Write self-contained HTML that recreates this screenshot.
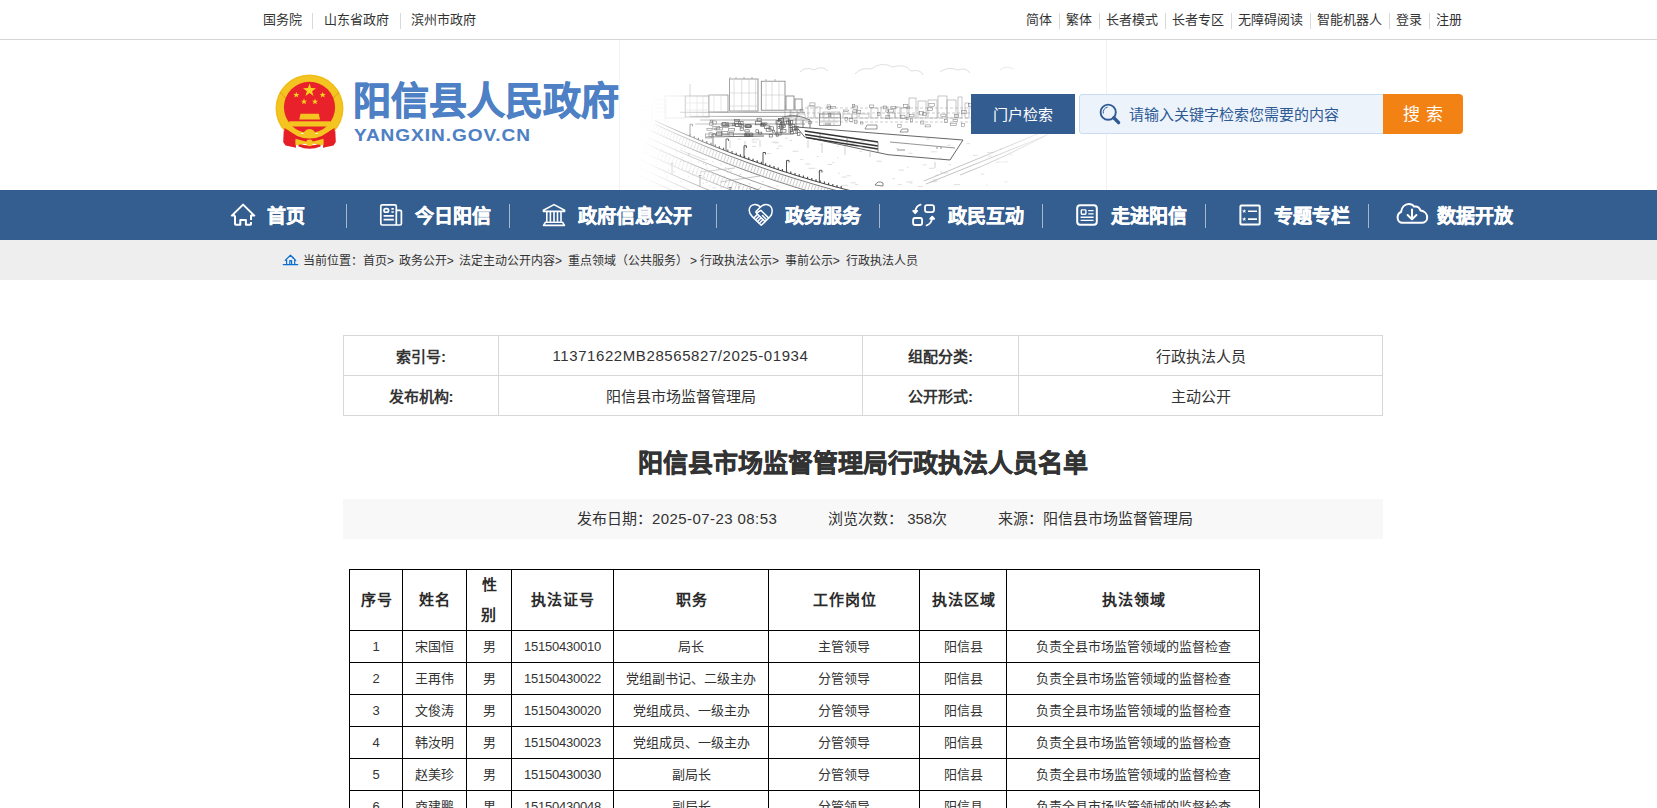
<!DOCTYPE html>
<html lang="zh-CN">
<head>
<meta charset="utf-8">
<title>阳信县市场监督管理局行政执法人员名单</title>
<style>
*{margin:0;padding:0;box-sizing:border-box}
html,body{width:1657px;height:808px;overflow:hidden;background:#fff}
body{font-family:"Liberation Sans",sans-serif;color:#333;position:relative}
.abs{position:absolute;white-space:nowrap}
/* top bar */
#top{position:absolute;left:0;top:0;width:1657px;height:40px;border-bottom:1px solid #d6d6d6}
#top .t{position:absolute;top:10px;font-size:13px;line-height:20px;color:#333;white-space:nowrap}
#top .s{position:absolute;top:13px;width:1px;height:16px;background:#d9d9d9}
/* header */
#hdr{position:absolute;left:0;top:40px;width:1657px;height:150px;background:#fff}
#title{position:absolute;left:353px;top:76px;font-size:38px;line-height:50px;font-weight:bold;color:#4d80c4;-webkit-text-stroke:.9px #4d80c4;white-space:nowrap}
#domain{position:absolute;left:354px;top:121px;font-size:17px;line-height:30px;font-weight:bold;color:#4d80c4;letter-spacing:.85px;-webkit-text-stroke:.1px #4d80c4;transform:scaleX(1.12);transform-origin:0 0;white-space:nowrap}
#sbtn{position:absolute;left:971px;top:94px;width:104px;height:40px;background:#335c91;color:#fff;font-size:15px;line-height:42px;text-align:center}
#sinput{position:absolute;left:1079px;top:94px;width:306px;height:40px;background:#edf3fb;border:1px solid #c9dcf3;border-radius:3px 0 0 3px}
#sph{position:absolute;left:1129px;top:105px;font-size:15px;line-height:20px;color:#2d5a94;white-space:nowrap}
#sgo{position:absolute;left:1383px;top:94px;width:80px;height:40px;background:#f28214;border-radius:0 4px 4px 0;color:#fff;font-size:17px;line-height:42px;text-align:center;letter-spacing:6px;text-indent:6px}
/* nav */
#nav{position:absolute;left:0;top:190px;width:1657px;height:50px;background:#345d90}
#navi .n{position:absolute;top:202px;font-size:19px;line-height:30px;font-weight:bold;-webkit-text-stroke:.45px #fff;color:#fff;white-space:nowrap}
#navi .sep{position:absolute;top:204px;width:1px;height:24px;background:rgba(255,255,255,.55)}
#navi svg{position:absolute}
/* breadcrumb */
#bc{position:absolute;left:0;top:240px;width:1657px;height:40px;background:#eeeeee}
#bct span{position:absolute;top:251px;font-size:12px;line-height:20px;color:#333;white-space:nowrap}
/* info table */
table{border-collapse:collapse}
#info{position:absolute;left:343px;top:335px;width:1040px;table-layout:fixed}
#info td{border:1px solid #d7d7d7;height:40px;text-align:center;font-size:15px;color:#333;padding:0}
#info td.l{font-weight:bold}
#atitle{position:absolute;left:343px;width:1040px;top:443px;font-size:25px;line-height:40px;font-weight:bold;color:#333;-webkit-text-stroke:.5px #333;text-align:center;white-space:nowrap}
#meta{position:absolute;left:343px;top:499px;width:1040px;height:40px;background:#f8f8f8}
.mt{position:absolute;top:509px;font-size:15px;line-height:20px;color:#333;white-space:nowrap}
/* data table */
#dt{position:absolute;left:349px;top:569px;table-layout:fixed}
#dt td{border:1px solid #000;text-align:center;font-size:13px;color:#333;padding:0;height:32px;line-height:20px}
#dt td.n{letter-spacing:-.25px}
#dt tr.h td{font-weight:bold;font-size:15px;height:61px;line-height:30px;color:#2a2a2a;letter-spacing:1px;text-indent:1px}
</style>
</head>
<body>
<div id="top">
  <span class="t" style="left:263px">国务院</span>
  <span class="s" style="left:312px"></span>
  <span class="t" style="left:324px">山东省政府</span>
  <span class="s" style="left:400px"></span>
  <span class="t" style="left:411px">滨州市政府</span>

  <span class="t" style="left:1026px">简体</span>
  <span class="s" style="left:1059px"></span>
  <span class="t" style="left:1066px">繁体</span>
  <span class="s" style="left:1099px"></span>
  <span class="t" style="left:1106px">长者模式</span>
  <span class="s" style="left:1165px"></span>
  <span class="t" style="left:1172px">长者专区</span>
  <span class="s" style="left:1231px"></span>
  <span class="t" style="left:1238px">无障碍阅读</span>
  <span class="s" style="left:1310px"></span>
  <span class="t" style="left:1317px">智能机器人</span>
  <span class="s" style="left:1389px"></span>
  <span class="t" style="left:1396px">登录</span>
  <span class="s" style="left:1429px"></span>
  <span class="t" style="left:1436px">注册</span>
</div>

<div id="hdr"></div>
<svg class="abs" style="left:619px;top:40px" width="488" height="150" viewBox="619 40 488 150"><defs><linearGradient id="fl" x1="0" x2="1" y1="0" y2="0"><stop offset="0" stop-color="#fff" stop-opacity="1"/><stop offset=".06" stop-color="#fff" stop-opacity=".95"/><stop offset=".16" stop-color="#fff" stop-opacity=".45"/><stop offset=".26" stop-color="#fff" stop-opacity="0"/><stop offset=".72" stop-color="#fff" stop-opacity="0"/><stop offset=".85" stop-color="#fff" stop-opacity=".6"/><stop offset="1" stop-color="#fff" stop-opacity=".9"/></linearGradient><linearGradient id="ft" x1="0" x2="0" y1="0" y2="1"><stop offset="0" stop-color="#fff" stop-opacity=".6"/><stop offset=".3" stop-color="#fff" stop-opacity="0"/></linearGradient><clipPath id="sc"><rect x="619" y="40" width="488" height="150"/></clipPath></defs><g clip-path="url(#sc)"><path d="M800 72 q6-6 14-2 q8-5 14 1 M855 74 q6-7 16-5 q10-8 22-2 q12-4 18 4 q10-2 12 4 M940 72 q8-6 18-2 q8-3 12 3 M1000 70 q6-5 14-1" stroke="#c4c4c4" stroke-width=".7" fill="none"/><g stroke="#a0a0a0" stroke-width=".6" fill="none"><rect x="785" y="106" width="5" height="12"/><rect x="791" y="107" width="6" height="11"/><rect x="797" y="114" width="8" height="4"/><rect x="808" y="106" width="6" height="12"/><rect x="815" y="107" width="5" height="11"/><rect x="823" y="112" width="7" height="6"/><rect x="831" y="112" width="9" height="6"/><rect x="843" y="114" width="9" height="4"/><rect x="852" y="114" width="5" height="4"/><rect x="859" y="114" width="10" height="4"/><rect x="871" y="108" width="7" height="10"/><rect x="881" y="107" width="7" height="11"/><rect x="889" y="113" width="6" height="5"/><rect x="895" y="107" width="5" height="11"/><rect x="901" y="108" width="6" height="10"/><rect x="909" y="98" width="7" height="20"/><rect x="918" y="101" width="8" height="17"/><rect x="928" y="100" width="9" height="18"/><rect x="938" y="96" width="9" height="22"/><rect x="947" y="100" width="9" height="18"/><rect x="958" y="97" width="4" height="21"/><rect x="965" y="103" width="4" height="15"/><rect x="972" y="100" width="5" height="18"/><rect x="980" y="108" width="10" height="10"/><rect x="990" y="114" width="4" height="4"/><rect x="997" y="109" width="9" height="9"/><rect x="1008" y="111" width="8" height="7"/></g><path d="M790 108 H1000 M792 113 H1010 M800 118 H1030 M800 122 H1000" stroke="#999" stroke-width=".5" stroke-dasharray="3 2" fill="none"/><g stroke="#7a7a7a" stroke-width=".8" fill="#fff"><rect x="729.5" y="79" width="28.5" height="32"/><rect x="761.3" y="81.2" width="23.7" height="29"/><rect x="685.3" y="96" width="23.7" height="21"/><rect x="709" y="95" width="19" height="17"/><rect x="665" y="96" width="20" height="22" stroke="#bbb"/><rect x="786" y="96" width="8" height="14"/><rect x="795" y="99" width="7" height="11"/></g><path d="M734 79 V111 M741.7 79 V111 M749 79 V111 M755.6 79 V111 M729.5 93 H758 M729.5 106 H758 M766 81 V110 M772 81 V110 M779 81 V110 M761.3 95 H785 M690 96 V117 M697 96 V117 M703 96 V117 M685.3 103 H709 M685.3 110 H709 M714 95 V112 M721 95 V112" stroke="#bdbdbd" stroke-width=".5" fill="none"/><path d="M730 77 v2 M736 77 v2 M744 77 v2 M752 77 v2 M766 79 v2 M775 79 v2 M690 84 v12" stroke="#777" stroke-width=".6"/><g stroke="#c4c4c4" stroke-width=".5" fill="none"><rect x="652" y="100" width="14" height="20"/><rect x="640" y="106" width="12" height="16"/><path d="M655 104 h10 M655 108 h10 M655 112 h10 M642 110 h9 M642 114 h9"/></g><path d="M680 112.3 H805 M690 116.4 H800 M700 120 H810 M695 124 H805" stroke="#777" stroke-width=".7" fill="none"/><g stroke="#555" stroke-width=".6" fill="none"><rect x="734.4" y="119.3" width="5.0" height="1.6"/><rect x="723.8" y="124.9" width="5.1" height="1.9"/><rect x="709.0" y="132.8" width="3.6" height="3.9"/><rect x="790.2" y="124.4" width="4.3" height="2.8"/><rect x="766.2" y="128.1" width="4.8" height="3.1"/><rect x="794.4" y="126.6" width="4.2" height="3.3"/><rect x="727.6" y="123.1" width="6.9" height="2.8"/><rect x="757.1" y="118.2" width="4.1" height="2.9"/><rect x="706.9" y="128.5" width="5.2" height="1.7"/><rect x="764.6" y="125.9" width="5.4" height="2.4"/><rect x="772.2" y="130.5" width="2.1" height="1.7"/><rect x="769.2" y="134.4" width="3.3" height="2.6"/><rect x="761.3" y="123.4" width="3.8" height="2.3"/><rect x="740.1" y="128.1" width="3.5" height="2.4"/><rect x="778.4" y="118.5" width="4.8" height="3.3"/><rect x="734.5" y="121.8" width="6.0" height="2.1"/><rect x="722.8" y="125.4" width="5.5" height="1.8"/><rect x="735.6" y="123.7" width="6.2" height="2.6"/><rect x="786.3" y="120.9" width="3.7" height="3.1"/><rect x="789.1" y="125.7" width="3.1" height="1.8"/><rect x="755.3" y="121.2" width="6.0" height="3.6"/><rect x="722.4" y="122.7" width="6.0" height="3.1"/><rect x="781.6" y="123.9" width="2.6" height="2.2"/><rect x="780.4" y="122.6" width="3.7" height="2.5"/><rect x="744.9" y="125.0" width="6.6" height="1.9"/><rect x="705.4" y="134.0" width="6.4" height="4.0"/><rect x="746.3" y="134.2" width="6.6" height="2.1"/><rect x="775.8" y="132.2" width="5.3" height="2.8"/><rect x="732.5" y="123.8" width="3.1" height="1.7"/><rect x="760.9" y="122.9" width="6.1" height="1.6"/><rect x="790.8" y="129.8" width="6.6" height="3.7"/><rect x="790.5" y="127.8" width="2.1" height="3.4"/><rect x="721.3" y="123.1" width="5.3" height="2.8"/><rect x="744.3" y="134.0" width="5.1" height="2.4"/><rect x="729.0" y="132.6" width="4.4" height="3.5"/><rect x="738.4" y="121.4" width="4.7" height="3.5"/><rect x="721.3" y="131.5" width="6.6" height="3.5"/><rect x="783.2" y="118.1" width="5.1" height="3.7"/><rect x="709.7" y="122.6" width="3.3" height="2.8"/><rect x="745.2" y="126.0" width="5.9" height="1.5"/><rect x="710.2" y="120.2" width="2.6" height="1.7"/><rect x="797.6" y="132.5" width="2.4" height="2.8"/><rect x="735.0" y="123.3" width="3.8" height="3.1"/><rect x="760.7" y="124.1" width="3.0" height="2.3"/><rect x="716.8" y="127.4" width="5.6" height="2.5"/><rect x="712.6" y="121.0" width="3.9" height="3.0"/><rect x="779.3" y="124.5" width="6.0" height="3.1"/><rect x="746.0" y="124.3" width="4.5" height="3.3"/><rect x="744.9" y="129.8" width="4.3" height="2.1"/><rect x="755.9" y="129.8" width="2.4" height="2.6"/><rect x="745.5" y="133.0" width="6.7" height="2.4"/><rect x="790.3" y="131.4" width="3.3" height="2.7"/><rect x="716.7" y="131.8" width="5.3" height="3.7"/><rect x="780.3" y="129.3" width="5.7" height="2.9"/><rect x="714.8" y="128.0" width="2.0" height="1.9"/><rect x="778.6" y="118.8" width="2.5" height="1.7"/><rect x="788.6" y="121.0" width="2.1" height="3.6"/><rect x="716.5" y="132.3" width="5.4" height="3.6"/><rect x="795.5" y="127.8" width="6.0" height="1.6"/><rect x="777.9" y="126.7" width="5.6" height="1.8"/><rect x="776.2" y="133.9" width="2.3" height="2.3"/><rect x="758.6" y="132.1" width="3.2" height="1.9"/><rect x="728.7" y="128.5" width="5.8" height="2.5"/><rect x="739.9" y="124.7" width="3.8" height="2.5"/><rect x="712.9" y="126.5" width="6.9" height="2.5"/><rect x="776.0" y="120.7" width="5.5" height="3.4"/><rect x="769.0" y="126.8" width="4.4" height="3.1"/><rect x="790.3" y="120.5" width="2.5" height="3.4"/><rect x="792.1" y="126.8" width="4.2" height="3.3"/><rect x="722.7" y="122.5" width="3.0" height="3.0"/></g><g stroke="#777" stroke-width=".5" fill="none"><rect x="853.0" y="106.0" width="4.8" height="3.4"/><rect x="849.2" y="118.3" width="3.7" height="3.2"/><rect x="906.9" y="106.9" width="2.9" height="1.5"/><rect x="885.9" y="110.0" width="2.7" height="2.2"/><rect x="854.4" y="120.1" width="2.6" height="3.5"/><rect x="885.9" y="115.6" width="3.9" height="3.2"/><rect x="954.3" y="114.5" width="3.9" height="2.9"/><rect x="961.3" y="110.4" width="4.9" height="3.4"/><rect x="883.5" y="106.0" width="2.9" height="2.9"/><rect x="925.1" y="124.9" width="5.4" height="2.0"/><rect x="827.9" y="106.7" width="2.7" height="2.9"/><rect x="961.7" y="123.4" width="3.0" height="3.2"/><rect x="852.7" y="111.0" width="4.9" height="1.7"/><rect x="808.5" y="121.7" width="3.2" height="2.2"/><rect x="906.1" y="117.6" width="2.0" height="2.2"/><rect x="877.2" y="112.6" width="2.8" height="2.7"/><rect x="981.1" y="110.2" width="4.2" height="1.7"/><rect x="845.0" y="117.3" width="2.5" height="3.3"/><rect x="971.8" y="102.5" width="5.8" height="2.2"/><rect x="944.5" y="119.7" width="3.2" height="2.9"/><rect x="920.8" y="121.0" width="3.1" height="3.0"/><rect x="982.3" y="117.5" width="4.1" height="1.7"/><rect x="888.8" y="109.2" width="4.9" height="2.9"/><rect x="903.3" y="104.7" width="4.6" height="2.8"/><rect x="825.8" y="123.1" width="4.6" height="1.7"/><rect x="976.4" y="103.7" width="3.3" height="2.9"/><rect x="909.5" y="114.4" width="4.6" height="2.4"/><rect x="852.5" y="104.6" width="2.3" height="2.9"/><rect x="940.9" y="114.1" width="5.0" height="2.2"/><rect x="843.2" y="110.0" width="5.5" height="1.6"/><rect x="890.9" y="106.4" width="5.1" height="2.2"/><rect x="856.6" y="110.5" width="4.2" height="3.0"/><rect x="860.6" y="122.0" width="2.4" height="2.0"/><rect x="809.9" y="102.9" width="5.1" height="3.0"/><rect x="827.0" y="104.9" width="3.7" height="3.0"/><rect x="953.1" y="119.5" width="4.4" height="1.8"/><rect x="869.7" y="105.0" width="4.1" height="2.6"/><rect x="830.4" y="106.5" width="5.1" height="1.6"/><rect x="950.6" y="123.2" width="5.8" height="2.3"/><rect x="900.5" y="115.2" width="4.5" height="3.5"/><rect x="927.3" y="107.8" width="5.4" height="2.5"/><rect x="910.3" y="118.9" width="2.0" height="3.0"/><rect x="922.4" y="112.8" width="4.1" height="2.4"/><rect x="828.7" y="113.8" width="2.1" height="2.5"/><rect x="919.2" y="111.5" width="4.3" height="3.4"/><rect x="968.4" y="103.5" width="5.2" height="2.7"/><rect x="800.1" y="109.4" width="2.9" height="1.7"/><rect x="897.8" y="124.2" width="3.3" height="3.2"/><rect x="928.9" y="103.5" width="5.4" height="2.7"/><rect x="975.4" y="118.6" width="5.0" height="2.2"/></g><path d="M706 137 L764 136 M712 134 H790" stroke="#555" stroke-width=".9" fill="none"/><path d="M777 133 V121 Q790 110 810 120 V133 M782 133 V122 M789 133 V118 M796 133 V118 M803 133 V120" stroke="#666" stroke-width=".8" fill="none"/><rect x="819.4" y="114" width="21.2" height="11.3" fill="none" stroke="#666" stroke-width=".7"/><path d="M819.4 117.5 H840.6 M819.4 121 H840.6 M824 114 V125 M829 114 V125 M834 114 V125" stroke="#999" stroke-width=".5"/><path d="M796.5 127 L963 140 L950 160 L888 154.7 L804.7 137 Z" fill="#fff" stroke="#555" stroke-width=".9"/><path d="M804.7 131 L878 142 M805 134.5 L878 146 M806 137.5 L878 149" stroke="#333" stroke-width="1.4" fill="none"/><path d="M878 142 V152 M820 133.5 V141 M847 137 V146 M890 142 L955 148 M897 150 h8 M936 148 h2 M940 148 h2" stroke="#666" stroke-width=".7" fill="none"/><path d="M865 129 h12 v-4 h-10 z M900 132 h8 v-3 h-6 z" stroke="#555" stroke-width=".6" fill="none"/><path d="M953.9 184.6 h6.2 M846.7 175.8 h4.2 M751.6 140.1 h1.9 M778.1 146.0 h4.2 M922.8 164.9 h3.8 M908.3 153.2 h4.1 M939.6 158.1 h2.5 M980.8 174.0 h3.5 M827.6 164.5 h4.8 M784.9 138.1 h2.6 M947.1 145.2 h4.0 M776.6 148.5 h2.4 M837.1 146.4 h1.7 M751.9 146.4 h4.2 M737.3 139.1 h4.0 M838.2 173.2 h1.8 M837.0 157.8 h1.6 M1000.0 148.9 h2.0 M857.6 146.2 h4.9 M820.4 144.2 h1.8 M931.0 151.8 h5.8 M855.0 184.6 h3.2 M792.5 151.3 h6.0 M902.4 155.2 h2.0 M917.9 186.5 h4.8 M909.8 183.0 h2.6 M1002.4 161.8 h5.9 M986.0 185.0 h1.7 M808.4 168.3 h6.7 M966.5 143.7 h3.6 M816.9 172.0 h6.6 M932.8 179.8 h4.5 M987.8 156.1 h3.8 M859.4 151.5 h2.4 M929.0 168.3 h5.4 M832.2 162.4 h2.3 M926.1 139.1 h4.1 M940.0 171.9 h2.0 M906.3 181.9 h6.3 M850.5 182.8 h5.5 M816.8 156.5 h1.9 M751.9 142.0 h5.1 M789.8 140.4 h2.3 M906.9 167.3 h1.6 M841.7 177.1 h4.8 M948.7 164.8 h2.5 M771.5 142.0 h6.0 M752.6 139.2 h6.8 M898.5 170.1 h5.7 M972.8 155.3 h4.8 M849.2 143.5 h6.1 M892.4 178.7 h2.6 M876.4 161.2 h5.5 M860.5 141.6 h4.5 M933.2 159.1 h5.1 M895.7 148.7 h3.4 M1008.8 154.8 h3.9 M930.6 181.7 h6.9 M897.5 184.6 h4.4 M841.4 185.4 h6.5 M995.4 162.2 h5.8 M986.9 152.6 h6.6 M773.5 142.8 h5.5 M805.3 164.0 h5.0 M800.0 159.6 h3.4 M935.2 175.3 h3.1 M839.2 141.9 h2.3 M941.2 173.0 h6.9 M1004.1 181.8 h3.5 M766.8 153.6 h4.0" stroke="#c4c4c4" stroke-width=".55" fill="none"/><path d="M808 140 v8 M822 143 v10 M845 146 v9 M870 150 v7 M935 162 v6 M730 140 v8 M745 141 v9 M760 140 v7" stroke="#b4b4b4" stroke-width=".6"/><path d="M655.0 120.7 L659.0 122.5 L663.0 124.4 L667.0 126.2 L671.0 128.0 L675.0 129.8 L679.0 131.5 L683.0 133.3 L687.0 135.0 L691.0 136.7 L695.0 138.4 L699.0 140.1 L703.0 141.8 L707.0 143.4 L711.0 145.0 L715.0 146.6 L719.0 148.2 L723.0 149.8 L727.0 151.4 L731.0 152.9 L735.0 154.4 L739.0 155.9 L743.0 157.4 L747.0 158.9 L751.0 160.3 L755.0 161.7 L759.0 163.1 L763.0 164.5 L767.0 165.9 L771.0 167.3 L775.0 168.6 L779.0 170.0 L783.0 171.3 L787.0 172.5 L791.0 173.8 L795.0 175.1 L799.0 176.3 L803.0 177.5 L807.0 178.7 L811.0 179.9 L815.0 181.1 L819.0 182.2 L823.0 183.4 L827.0 184.5 L831.0 185.6 L835.0 186.7 L839.0 187.7 L843.0 188.8 L847.0 189.8 L851.0 190.8 L855.0 191.8 L859.0 192.8" stroke="#444" stroke-width="1.0" fill="none"/><path d="M655.0 124.2 L659.0 126.0 L663.0 127.9 L667.0 129.7 L671.0 131.5 L675.0 133.3 L679.0 135.0 L683.0 136.8 L687.0 138.5 L691.0 140.2 L695.0 141.9 L699.0 143.6 L703.0 145.3 L707.0 146.9 L711.0 148.5 L715.0 150.1 L719.0 151.7 L723.0 153.3 L727.0 154.9 L731.0 156.4 L735.0 157.9 L739.0 159.4 L743.0 160.9 L747.0 162.4 L751.0 163.8 L755.0 165.2 L759.0 166.6 L763.0 168.0 L767.0 169.4 L771.0 170.8 L775.0 172.1 L779.0 173.5 L783.0 174.8 L787.0 176.0 L791.0 177.3 L795.0 178.6 L799.0 179.8 L803.0 181.0 L807.0 182.2 L811.0 183.4 L815.0 184.6 L819.0 185.7 L823.0 186.9 L827.0 188.0 L831.0 189.1 L835.0 190.2 L839.0 191.2 L843.0 192.3 L847.0 193.3 L851.0 194.3 L855.0 195.3 L859.0 196.3" stroke="#555" stroke-width="0.8" fill="none"/><path d="M650.0 130.3 L654.0 132.2 L658.0 134.1 L662.0 135.9 L666.0 137.7 L670.0 139.5 L674.0 141.3 L678.0 143.1 L682.0 144.9 L686.0 146.6 L690.0 148.3 L694.0 150.0 L698.0 151.7 L702.0 153.3 L706.0 155.0 L710.0 156.6 L714.0 158.2 L718.0 159.8 L722.0 161.4 L726.0 163.0 L730.0 164.5 L734.0 166.0 L738.0 167.5 L742.0 169.0 L746.0 170.5 L750.0 171.9 L754.0 173.4 L758.0 174.8 L762.0 176.2 L766.0 177.6 L770.0 178.9 L774.0 180.3 L778.0 181.6 L782.0 182.9 L786.0 184.2 L790.0 185.5 L794.0 186.8 L798.0 188.0 L802.0 189.2 L806.0 190.4 L810.0 191.6 L814.0 192.8 L818.0 193.9 L822.0 195.1 L826.0 196.2 L830.0 197.3 L834.0 198.4 L838.0 199.5 L842.0 200.5 L846.0 201.5 L850.0 202.5 L854.0 203.5 L858.0 204.5" stroke="#666" stroke-width="0.8" fill="none"/><path d="M648.0 137.4 L652.0 139.3 L656.0 141.2 L660.0 143.0 L664.0 144.8 L668.0 146.6 L672.0 148.4 L676.0 150.2 L680.0 152.0 L684.0 153.7 L688.0 155.4 L692.0 157.2 L696.0 158.8 L700.0 160.5 L704.0 162.2 L708.0 163.8 L712.0 165.4 L716.0 167.0 L720.0 168.6 L724.0 170.2 L728.0 171.7 L732.0 173.3 L736.0 174.8 L740.0 176.3 L744.0 177.8 L748.0 179.2 L752.0 180.7 L756.0 182.1 L760.0 183.5 L764.0 184.9 L768.0 186.3 L772.0 187.6 L776.0 189.0 L780.0 190.3 L784.0 191.6 L788.0 192.9 L792.0 194.1 L796.0 195.4 L800.0 196.6 L804.0 197.8 L808.0 199.0 L812.0 200.2 L816.0 201.4 L820.0 202.5 L824.0 203.6 L828.0 204.8 L832.0 205.8 L836.0 206.9 L840.0 208.0 L844.0 209.0 L848.0 210.0 L852.0 211.0 L856.0 212.0 L860.0 213.0" stroke="#777" stroke-width="0.7" fill="none"/><path d="M645.0 143.0 L649.0 144.9 L653.0 146.8 L657.0 148.6 L661.0 150.5 L665.0 152.3 L669.0 154.1 L673.0 155.9 L677.0 157.7 L681.0 159.4 L685.0 161.2 L689.0 162.9 L693.0 164.6 L697.0 166.3 L701.0 167.9 L705.0 169.6 L709.0 171.2 L713.0 172.8 L717.0 174.4 L721.0 176.0 L725.0 177.6 L729.0 179.1 L733.0 180.6 L737.0 182.2 L741.0 183.7 L745.0 185.1 L749.0 186.6 L753.0 188.0 L757.0 189.4 L761.0 190.8 L765.0 192.2 L769.0 193.6 L773.0 195.0 L777.0 196.3 L781.0 197.6 L785.0 198.9 L789.0 200.2 L793.0 201.5 L797.0 202.7 L801.0 203.9 L805.0 205.1 L809.0 206.3 L813.0 207.5 L817.0 208.7 L821.0 209.8 L825.0 210.9 L829.0 212.0 L833.0 213.1 L837.0 214.2 L841.0 215.2 L845.0 216.3 L849.0 217.3 L853.0 218.3 L857.0 219.3" stroke="#666" stroke-width="0.8" fill="none"/><path d="M642.0 151.5 L646.0 153.5 L650.0 155.3 L654.0 157.2 L658.0 159.1 L662.0 160.9 L666.0 162.7 L670.0 164.5 L674.0 166.3 L678.0 168.1 L682.0 169.9 L686.0 171.6 L690.0 173.3 L694.0 175.0 L698.0 176.7 L702.0 178.3 L706.0 180.0 L710.0 181.6 L714.0 183.2 L718.0 184.8 L722.0 186.4 L726.0 188.0 L730.0 189.5 L734.0 191.0 L738.0 192.5 L742.0 194.0 L746.0 195.5 L750.0 196.9 L754.0 198.4 L758.0 199.8 L762.0 201.2 L766.0 202.6 L770.0 203.9 L774.0 205.3 L778.0 206.6 L782.0 207.9 L786.0 209.2 L790.0 210.5 L794.0 211.8 L798.0 213.0 L802.0 214.2 L806.0 215.4 L810.0 216.6 L814.0 217.8 L818.0 218.9 L822.0 220.1 L826.0 221.2 L830.0 222.3 L834.0 223.4 L838.0 224.5 L842.0 225.5 L846.0 226.5 L850.0 227.5 L854.0 228.5 L858.0 229.5" stroke="#888" stroke-width="0.7" fill="none"/><path d="M640.0 159.6 L644.0 161.5 L648.0 163.4 L652.0 165.3 L656.0 167.2 L660.0 169.0 L664.0 170.8 L668.0 172.6 L672.0 174.4 L676.0 176.2 L680.0 178.0 L684.0 179.7 L688.0 181.4 L692.0 183.2 L696.0 184.8 L700.0 186.5 L704.0 188.2 L708.0 189.8 L712.0 191.4 L716.0 193.0 L720.0 194.6 L724.0 196.2 L728.0 197.7 L732.0 199.3 L736.0 200.8 L740.0 202.3 L744.0 203.8 L748.0 205.2 L752.0 206.7 L756.0 208.1 L760.0 209.5 L764.0 210.9 L768.0 212.3 L772.0 213.6 L776.0 215.0 L780.0 216.3 L784.0 217.6 L788.0 218.9 L792.0 220.1 L796.0 221.4 L800.0 222.6 L804.0 223.8 L808.0 225.0 L812.0 226.2 L816.0 227.4 L820.0 228.5 L824.0 229.6 L828.0 230.8 L832.0 231.8 L836.0 232.9 L840.0 234.0 L844.0 235.0 L848.0 236.0 L852.0 237.0 L856.0 238.0 L860.0 239.0" stroke="#666" stroke-width="0.8" fill="none"/><path d="M640.0 167.6 L644.0 169.5 L648.0 171.4 L652.0 173.3 L656.0 175.2 L660.0 177.0 L664.0 178.8 L668.0 180.6 L672.0 182.4 L676.0 184.2 L680.0 186.0 L684.0 187.7 L688.0 189.4 L692.0 191.2 L696.0 192.8 L700.0 194.5 L704.0 196.2 L708.0 197.8 L712.0 199.4 L716.0 201.0 L720.0 202.6 L724.0 204.2 L728.0 205.7 L732.0 207.3 L736.0 208.8 L740.0 210.3 L744.0 211.8 L748.0 213.2 L752.0 214.7 L756.0 216.1 L760.0 217.5 L764.0 218.9 L768.0 220.3 L772.0 221.6 L776.0 223.0 L780.0 224.3 L784.0 225.6 L788.0 226.9 L792.0 228.1 L796.0 229.4 L800.0 230.6 L804.0 231.8 L808.0 233.0 L812.0 234.2 L816.0 235.4 L820.0 236.5 L824.0 237.6 L828.0 238.8 L832.0 239.8 L836.0 240.9 L840.0 242.0 L844.0 243.0 L848.0 244.0 L852.0 245.0 L856.0 246.0 L860.0 247.0" stroke="#888" stroke-width="0.7" fill="none"/><path d="M640.0 175.6 L644.0 177.5 L648.0 179.4 L652.0 181.3 L656.0 183.2 L660.0 185.0 L664.0 186.8 L668.0 188.6 L672.0 190.4 L676.0 192.2 L680.0 194.0 L684.0 195.7 L688.0 197.4 L692.0 199.2 L696.0 200.8 L700.0 202.5 L704.0 204.2 L708.0 205.8 L712.0 207.4 L716.0 209.0 L720.0 210.6 L724.0 212.2 L728.0 213.7 L732.0 215.3 L736.0 216.8 L740.0 218.3 L744.0 219.8 L748.0 221.2 L752.0 222.7 L756.0 224.1 L760.0 225.5 L764.0 226.9 L768.0 228.3 L772.0 229.6 L776.0 231.0 L780.0 232.3 L784.0 233.6 L788.0 234.9 L792.0 236.1 L796.0 237.4 L800.0 238.6 L804.0 239.8 L808.0 241.0 L812.0 242.2 L816.0 243.4 L820.0 244.5 L824.0 245.6 L828.0 246.8 L832.0 247.8 L836.0 248.9 L840.0 250.0 L844.0 251.0 L848.0 252.0 L852.0 253.0 L856.0 254.0 L860.0 255.0" stroke="#777" stroke-width="0.7" fill="none"/><path d="M690.0 136.3 v-2.2 M694.2 138.1 v-2.2 M698.4 139.9 v-2.2 M702.6 141.6 v-2.2 M706.8 143.3 v-2.2 M711.0 145.0 v-2.2 M715.2 146.7 v-2.2 M719.4 148.4 v-2.2 M723.6 150.0 v-2.2 M727.8 151.7 v-2.2 M732.0 153.3 v-2.2 M736.2 154.9 v-2.2 M740.4 156.4 v-2.2 M744.6 158.0 v-2.2 M748.8 159.5 v-2.2 M753.0 161.0 v-2.2 M757.2 162.5 v-2.2 M761.4 164.0 v-2.2 M765.6 165.4 v-2.2 M769.8 166.9 v-2.2 M774.0 168.3 v-2.2 M778.2 169.7 v-2.2 M782.4 171.1 v-2.2 M786.6 172.4 v-2.2 M790.8 173.8 v-2.2 M795.0 175.1 v-2.2 M799.2 176.4 v-2.2 M803.4 177.7 v-2.2 M807.6 178.9 v-2.2 M811.8 180.2 v-2.2 M816.0 181.4 v-2.2 M820.2 182.6 v-2.2 M824.4 183.8 v-2.2 M828.6 184.9 v-2.2 M832.8 186.1 v-2.2 M837.0 187.2 v-2.2 M841.2 188.3 v-2.2" stroke="#444" stroke-width="1.1"/><path d="M648.0 121.5 L645.5 128.8 M651.0 122.9 L648.5 130.2 M654.0 124.3 L651.5 131.6 M657.0 125.7 L654.5 133.0 M660.0 127.1 L657.5 134.4 M663.0 128.5 L660.5 135.8 M666.0 129.8 L663.5 137.1 M669.0 131.2 L666.5 138.5 M672.0 132.5 L669.5 139.8 M675.0 133.9 L672.5 141.2 M678.0 135.2 L675.5 142.5 M681.0 136.5 L678.5 143.8 M684.0 137.8 L681.5 145.1 M687.0 139.1 L684.5 146.4 M690.0 140.4 L687.5 147.7 M693.0 141.7 L690.5 149.0 M696.0 142.9 L693.5 150.2 M699.0 144.2 L696.5 151.5 M702.0 145.4 L699.5 152.7 M705.0 146.7 L702.5 154.0 M708.0 147.9 L705.5 155.2 M711.0 149.1 L708.5 156.4 M714.0 150.3 L711.5 157.6 M717.0 151.5 L714.5 158.8 M720.0 152.7 L717.5 160.0 M723.0 153.9 L720.5 161.2 M726.0 155.1 L723.5 162.4 M729.0 156.2 L726.5 163.5 M732.0 157.4 L729.5 164.7 M735.0 158.5 L732.5 165.8 M738.0 159.6 L735.5 166.9 M741.0 160.8 L738.5 168.1 M744.0 161.9 L741.5 169.2 M747.0 163.0 L744.5 170.3 M750.0 164.0 L747.5 171.3 M753.0 165.1 L750.5 172.4 M756.0 166.2 L753.5 173.5 M759.0 167.2 L756.5 174.5 M762.0 168.3 L759.5 175.6 M765.0 169.3 L762.5 176.6 M768.0 170.4 L765.5 177.7 M771.0 171.4 L768.5 178.7 M774.0 172.4 L771.5 179.7 M777.0 173.4 L774.5 180.7 M780.0 174.4 L777.5 181.7 M783.0 175.4 L780.5 182.7 M786.0 176.3 L783.5 183.6 M789.0 177.3 L786.5 184.6 M792.0 178.2 L789.5 185.5 M795.0 179.2 L792.5 186.5 M798.0 180.1 L795.5 187.4 M801.0 181.0 L798.5 188.3 M804.0 181.9 L801.5 189.2 M807.0 182.8 L804.5 190.1 M810.0 183.7 L807.5 191.0 M813.0 184.6 L810.5 191.9 M816.0 185.5 L813.5 192.8 M819.0 186.3 L816.5 193.6 M822.0 187.2 L819.5 194.5 M825.0 188.0 L822.5 195.3 M828.0 188.9 L825.5 196.2 M831.0 189.7 L828.5 197.0 M834.0 190.5 L831.5 197.8 M837.0 191.3 L834.5 198.6 M840.0 192.1 L837.5 199.4 M843.0 192.9 L840.5 200.2 M846.0 193.6 L843.5 200.9 M849.0 194.4 L846.5 201.7 M852.0 195.1 L849.5 202.4 M855.0 195.9 L852.5 203.2 M858.0 196.6 L855.5 203.9" stroke="#999" stroke-width=".5" fill="none"/><path d="M646.0 144.1 L643.0 152.9 M649.5 145.7 L646.5 154.5 M653.0 147.4 L650.0 156.2 M656.5 149.0 L653.5 157.8 M660.0 150.6 L657.0 159.4 M663.5 152.2 L660.5 161.0 M667.0 153.8 L664.0 162.6 M670.5 155.4 L667.5 164.2 M674.0 156.9 L671.0 165.7 M677.5 158.5 L674.5 167.3 M681.0 160.0 L678.0 168.8 M684.5 161.5 L681.5 170.3 M688.0 163.0 L685.0 171.8 M691.5 164.5 L688.5 173.3 M695.0 166.0 L692.0 174.8 M698.5 167.5 L695.5 176.3 M702.0 168.9 L699.0 177.7 M705.5 170.4 L702.5 179.2 M709.0 171.8 L706.0 180.6 M712.5 173.2 L709.5 182.0 M716.0 174.6 L713.0 183.4 M719.5 176.0 L716.5 184.8 M723.0 177.4 L720.0 186.2 M726.5 178.8 L723.5 187.6 M730.0 180.1 L727.0 188.9 M733.5 181.4 L730.5 190.2 M737.0 182.8 L734.0 191.6 M740.5 184.1 L737.5 192.9 M744.0 185.4 L741.0 194.2 M747.5 186.6 L744.5 195.4 M751.0 187.9 L748.0 196.7 M754.5 189.2 L751.5 198.0 M758.0 190.4 L755.0 199.2 M761.5 191.6 L758.5 200.4 M765.0 192.8 L762.0 201.6 M768.5 194.0 L765.5 202.8 M772.0 195.2 L769.0 204.0 M775.5 196.4 L772.5 205.2 M779.0 197.6 L776.0 206.4 M782.5 198.7 L779.5 207.5 M786.0 199.8 L783.0 208.6 M789.5 200.9 L786.5 209.7 M793.0 202.1 L790.0 210.9 M796.5 203.1 L793.5 211.9 M800.0 204.2 L797.0 213.0 M803.5 205.3 L800.5 214.1 M807.0 206.3 L804.0 215.1 M810.5 207.4 L807.5 216.2 M814.0 208.4 L811.0 217.2 M817.5 209.4 L814.5 218.2 M821.0 210.4 L818.0 219.2 M824.5 211.4 L821.5 220.2 M828.0 212.4 L825.0 221.2 M831.5 213.3 L828.5 222.1 M835.0 214.3 L832.0 223.1 M838.5 215.2 L835.5 224.0 M842.0 216.1 L839.0 224.9 M845.5 217.0 L842.5 225.8 M849.0 217.9 L846.0 226.7 M852.5 218.8 L849.5 227.6 M856.0 219.6 L853.0 228.4 M859.5 220.5 L856.5 229.3" stroke="#aaa" stroke-width=".5" fill="none"/><path d="M706.3 182.2 h.9 M708.9 171.8 h.9 M673.3 171.6 h.9 M760.2 187.2 h.9 M655.8 146.7 h.9 M684.8 149.7 h.9 M738.0 188.1 h.9 M656.0 164.6 h.9 M665.2 156.6 h.9 M734.9 182.9 h.9 M654.5 157.8 h.9 M698.2 161.8 h.9 M681.3 148.4 h.9 M681.7 157.2 h.9 M720.7 187.5 h.9 M712.7 187.9 h.9 M776.7 185.8 h.9 M749.8 189.4 h.9 M667.0 176.0 h.9 M713.0 174.9 h.9 M713.2 181.3 h.9 M705.6 164.7 h.9 M662.0 150.9 h.9 M688.0 154.6 h.9 M659.9 151.9 h.9 M748.8 188.4 h.9 M762.4 181.8 h.9 M675.6 147.9 h.9 M727.2 172.0 h.9 M705.4 164.6 h.9 M676.2 151.9 h.9 M661.5 148.7 h.9 M712.4 161.7 h.9 M681.1 161.3 h.9 M688.5 153.4 h.9 M648.0 177.6 h.9 M676.5 176.6 h.9 M714.5 187.8 h.9 M725.3 182.2 h.9 M703.0 163.2 h.9 M659.9 160.1 h.9 M657.8 181.4 h.9 M723.8 176.3 h.9 M709.6 185.8 h.9 M730.8 187.2 h.9 M770.6 189.8 h.9 M692.3 171.6 h.9 M662.5 155.8 h.9 M705.8 159.5 h.9 M706.7 168.1 h.9 M663.2 140.9 h.9 M720.5 164.2 h.9 M703.9 177.4 h.9 M738.8 175.9 h.9 M663.0 162.3 h.9 M659.2 138.1 h.9 M716.3 183.9 h.9 M688.4 171.0 h.9 M664.0 173.2 h.9 M650.7 182.3 h.9 M663.3 151.6 h.9 M758.6 188.5 h.9 M673.6 171.8 h.9 M688.8 153.9 h.9 M738.1 186.8 h.9 M690.6 161.2 h.9 M653.1 160.7 h.9 M731.3 188.2 h.9 M683.2 161.4 h.9 M718.1 168.7 h.9 M692.4 175.3 h.9 M682.8 187.3 h.9 M740.1 174.2 h.9 M748.9 183.8 h.9 M668.1 169.2 h.9 M688.7 155.6 h.9 M647.3 167.4 h.9 M668.6 170.7 h.9 M682.1 168.4 h.9 M687.2 171.3 h.9 M768.9 187.1 h.9 M656.8 161.6 h.9 M688.3 176.9 h.9 M680.9 152.6 h.9 M730.4 171.1 h.9 M704.4 173.7 h.9 M738.3 184.3 h.9 M687.9 162.0 h.9 M666.2 177.4 h.9 M680.5 181.9 h.9 M702.9 183.2 h.9 M728.4 169.3 h.9 M681.5 181.0 h.9 M725.1 167.9 h.9" stroke="#999" stroke-width=".8" fill="none"/><path d="M690 136.3 V124.3 h2.5 v2 M713 145.8 V133.8 h2.5 v2 M726 151.0 V139.0 h2.5 v2 M744 157.8 V145.8 h2.5 v2 M763 164.5 V152.5 h2.5 v2 M786.5 172.4 V160.4 h2.5 v2 M819.4 182.3 V170.3 h2.5 v2" stroke="#555" stroke-width="1" fill="none"/><path d="M672 174.4 V163.4 m-1.5 0 h3 M700 186.5 V175.5 m-1.5 0 h3 M730 198.5 V187.5 m-1.5 0 h3 M760 209.5 V198.5 m-1.5 0 h3" stroke="#777" stroke-width=".9" fill="none"/><path d="M680 150 L705 160 M700 172 L735 168 M720 182 L760 176" stroke="#999" stroke-width=".6" fill="none"/><path d="M924 181 L1040 133 M926 184 L1045 136 M960 175 Q1000 160 1060 128" stroke="#aaa" stroke-width=".7" fill="none"/><path d="M875 185 q3-5 8-2 v3 z" stroke="#555" stroke-width=".7" fill="none"/></g><rect x="619" y="40" width="488" height="150" fill="url(#fl)"/><rect x="619" y="40" width="488" height="150" fill="url(#ft)"/><path d="M619.5 40 V190 M1106.5 40 V190" stroke="#f2f2f2" stroke-width="1"/></svg>
<svg class="abs" style="left:265px;top:65px" width="90" height="90" viewBox="0 0 90 90">
<defs><clipPath id="ec"><rect x="0" y="0" width="90" height="68"/></clipPath></defs>
<g clip-path="url(#ec)">
<circle cx="44.5" cy="43.5" r="34" fill="#f4c520"/>
<circle cx="44.5" cy="43.5" r="33" fill="none" stroke="#e7b018" stroke-width=".8" opacity=".7"/>
<circle cx="44.5" cy="42.3" r="25.6" fill="#e8212a"/>
</g>
<path d="M14.8 27 L20.6 33 M74.2 27 L68.4 33" stroke="#d99a10" stroke-width=".9"/>
<polygon fill="#f7d21e" points="44.5,18.5 46.1,23.1 51,23.2 47.1,26.2 48.5,30.9 44.5,28.1 40.5,30.9 41.9,26.2 38,23.2 42.9,23.1"/>
<polygon fill="#f7d21e" points="31.3,26.8 32.1,29 34.4,29 32.6,30.4 33.3,32.6 31.3,31.3 29.3,32.6 30,30.4 28.2,29 30.5,29"/>
<polygon fill="#f7d21e" points="57.7,26.8 58.5,29 60.8,29 59,30.4 59.7,32.6 57.7,31.3 55.7,32.6 56.4,30.4 54.6,29 56.9,29"/>
<polygon fill="#f7d21e" points="39,33.5 39.8,35.7 42.1,35.7 40.3,37.1 41,39.3 39,38 37,39.3 37.7,37.1 35.9,35.7 38.2,35.7"/>
<polygon fill="#f7d21e" points="50,33.5 50.8,35.7 53.1,35.7 51.3,37.1 52,39.3 50,38 48,39.3 48.7,37.1 46.9,35.7 49.2,35.7"/>
<path d="M35.5 48.7 H53.8 L55 54.5 H34.3 Z" fill="#f4c520"/>
<rect x="24.2" y="56.3" width="41.3" height="5.2" fill="#f4c520"/>
<path d="M19.5 63 Q44.5 80 69.5 63 L70 71 Q44.5 84 19 71 Z" fill="#e61f26"/>
<path d="M18.7 66 L30.6 69 L31 82.8 L20.5 80.5 L18.2 77 Z" fill="#e61f26"/>
<path d="M70.3 66 L58.4 69 L58 82.8 L68.5 80.5 L70.8 77 Z" fill="#e61f26"/>
<path d="M21.5 60.5 Q32 72 44.5 71.8 Q57 72 67.5 60.5" fill="none" stroke="#f4c520" stroke-width="3.4"/>
<path d="M38 70.5 A6.5 6.5 0 0 1 51 70.5 Z" fill="#f4c520"/>
<path d="M33 78 Q44.5 83 56 78 L55.5 81.5 Q44.5 86 33.5 81.5 Z" fill="#e61f26"/>
<path d="M30.5 73.8 L44.5 77.5 L58.5 73.8 L58.5 80.2 L44.5 78.2 L30.5 80.2 Z" fill="#f4c520"/>
<circle cx="44.5" cy="77.8" r="3.4" fill="#f4c520"/>
</svg>
<div id="title">阳信县人民政府</div>
<div id="domain">YANGXIN.GOV.CN</div>
<div id="sbtn">门户检索</div>
<div id="sinput"></div>
<svg class="abs" style="left:1098px;top:102px" width="24" height="24" viewBox="0 0 24 24">
<circle cx="10.2" cy="10.2" r="7.6" fill="none" stroke="#2f5b95" stroke-width="1.9"/>
<path d="M5.3 11.5 A5.2 5.2 0 0 1 9.6 5.2" fill="none" stroke="#2f5b95" stroke-width="1"/>
<path d="M15.8 15.8 L20.6 20.6" stroke="#2f5b95" stroke-width="3.4" stroke-linecap="round"/>
</svg>
<div id="sph">请输入关键字检索您需要的内容</div>
<div id="sgo">搜索</div>

<div id="nav"></div>
<div id="navi"><svg style="left:226px;top:200px" width="34" height="30" viewBox="0 0 34 30" fill="none" stroke="#fff" stroke-width="2" stroke-linejoin="round">
<path d="M9 15.6 H5.8 L17.1 4.6 L28.3 15.6 H25 V20"/><path d="M25 22 V24 Q25 24.7 24.3 24.7 H19.9 V19.9 H14.3 V24.7 H9.7 Q9 24.7 9 24 V15.6"/>
</svg>
<span class="n" style="left:267px">首页</span>
<span class="sep" style="left:346px"></span>
<svg style="left:375px;top:200px" width="34" height="30" viewBox="0 0 34 30" fill="none" stroke="#fff" stroke-width="1.7" stroke-linejoin="round">
<path d="M21.2 25 H7.3 Q5.8 25 5.8 23.5 V6.3 Q5.8 4.8 7.3 4.8 H19.8 Q21.3 4.8 21.3 6.3 V25 H25 Q26.4 25 26.4 23.6 V11.6 Q26.4 10.4 25.2 10.4 H21.3"/>
<rect x="9" y="8.6" width="4.6" height="3.6" rx="1.8"/>
<path d="M16.4 8.8 H18.8 M16.4 12 H18.8 M8.6 15.8 H18.8 M8.6 19.7 H18.8"/>
</svg>
<span class="n" style="left:415px">今日阳信</span>
<span class="sep" style="left:509px"></span>
<svg style="left:538px;top:200px" width="34" height="30" viewBox="0 0 34 30" fill="none" stroke="#fff" stroke-width="1.6" stroke-linejoin="round">
<path d="M16 4.6 L26.6 10.2 V11.4 H5.4 V10.2 Z"/>
<path d="M8.8 12 V21.8 M12.4 12 V21.8 M16 12 V21.8 M19.5 12 V21.8 M23 12 V21.8"/>
<path d="M7.5 22.2 H24.5 L26.5 25.4 H5.5 Z"/>
</svg>
<span class="n" style="left:578px">政府信息公开</span>
<span class="sep" style="left:716px"></span>
<svg style="left:744px;top:200px" width="34" height="30" viewBox="0 0 34 30" fill="none" stroke="#fff" stroke-width="1.5" stroke-linejoin="round" stroke-linecap="round">
<path d="M16.5 7.2 C14.8 5 12.6 4.3 10.6 4.4 C7.3 4.6 5.2 7.3 5.2 10.6 C5.2 13 6.4 14.8 8.3 16.6 L17.3 25.3 L25.8 17 C27.4 15.3 28.2 13.3 28.2 10.9 C28.2 7.3 25.7 4.4 22 4.4 C19.6 4.4 17.8 5.6 16.2 7.3 L12.2 11.2 Q11.3 12.3 12.6 13 L16.8 10.3 L24.3 17.6"/>
<path d="M12.6 13.3 L21.2 21.6 M18.5 15.5 L22.4 19.6 M9.9 17.9 L12.9 14.9 M11.7 19.7 L14.7 16.7 M13.5 21.5 L16.5 18.5 M15.3 23.3 L18.3 20.3"/>
</svg>
<span class="n" style="left:785px">政务服务</span>
<span class="sep" style="left:879px"></span>
<svg style="left:906px;top:200px" width="34" height="30" viewBox="0 0 34 30" fill="none" stroke="#fff" stroke-width="1.8" stroke-linejoin="round" stroke-linecap="round">
<rect x="19" y="5.1" width="9" height="7" rx="2"/>
<rect x="7.1" y="18" width="9" height="7" rx="2"/>
<path d="M14.6 4.6 Q10 5.6 9.2 11.8"/><path d="M7.2 11 L9.2 13.2 L11.2 11 Z" fill="#fff"/>
<path d="M20.6 25.4 Q25.4 24 26.2 18"/><path d="M24.2 18.8 L26.2 16.6 L28.2 18.8 Z" fill="#fff"/>
</svg>
<span class="n" style="left:948px">政民互动</span>
<span class="sep" style="left:1042px"></span>
<svg style="left:1070px;top:200px" width="34" height="30" viewBox="0 0 34 30" fill="none" stroke="#fff" stroke-linejoin="round">
<rect x="7.2" y="5.2" width="19.6" height="19.5" rx="3" stroke-width="2"/>
<rect x="11.3" y="9.9" width="4.6" height="4.3" rx=".6" stroke-width="1.4"/>
<path d="M18.2 10.6 H23.6 M18.2 13.9 H23.6 M10.6 17.2 H23.6 M10.6 20.4 H23.6" stroke-width="1.4"/>
</svg>
<span class="n" style="left:1111px">走进阳信</span>
<span class="sep" style="left:1205px"></span>
<svg style="left:1233px;top:200px" width="34" height="30" viewBox="0 0 34 30" fill="none" stroke="#fff" stroke-linejoin="round">
<rect x="7.4" y="5.5" width="19.3" height="19" rx="1" stroke-width="2"/>
<path d="M15 11.3 H24 M15 19.1 H24" stroke-width="1.6"/>
<polygon fill="#fff" stroke="none" points="11.2,8.9 11.8,10.4 13.3,10.4 12.1,11.4 12.6,12.9 11.2,12 9.8,12.9 10.3,11.4 9.1,10.4 10.6,10.4"/>
<polygon fill="#fff" stroke="none" points="11.2,16.9 11.8,18.4 13.3,18.4 12.1,19.4 12.6,20.9 11.2,20 9.8,20.9 10.3,19.4 9.1,18.4 10.6,18.4"/>
</svg>
<span class="n" style="left:1274px">专题专栏</span>
<span class="sep" style="left:1368px"></span>
<svg style="left:1393px;top:200px" width="40" height="30" viewBox="0 0 40 30" fill="none" stroke="#fff" stroke-width="2" stroke-linejoin="round" stroke-linecap="round">
<path d="M9.6 22.8 C6.6 22.8 4.6 20.4 4.6 17.4 C4.6 14.8 6 12.9 8 12 C8.7 7.2 11.8 4 15.8 4 C18.2 4 20 5 21.2 6.6 C24.2 6.2 26.6 7.8 27.6 10.6 C31.4 11.1 34.2 14 34.2 17.4 C34.2 20.4 31.8 22.8 28.6 22.8 Z"/>
<path d="M19 9.6 V19.2 M14.6 15 L19 19.4 L23.4 15"/>
</svg>
<span class="n" style="left:1437px">数据开放</span></div>

<div id="bc"></div>
<svg class="abs" style="left:281px;top:252px" width="18" height="14" viewBox="0 0 18 14" fill="none" stroke="#0b6dcf" stroke-linejoin="round" stroke-linecap="round">
<path d="M4.2 8.4 L9.5 3.3 L14.7 8.4" stroke-width="1.3"/><path d="M12 5.6 L12.4 6.3" stroke-width="1.4"/><path d="M5.6 8.2 V12.4 M13.7 8.2 V12.4 M8.8 12.3 V8.6 H10.6 V12.3" stroke-width="1.2"/><path d="M2.3 12.6 H16.7" stroke-width="1.3"/>
</svg>
<div id="bct">
<span style="left:303px">当前位置：</span><span style="left:363px">首页&gt;</span><span style="left:398.7px">政务公开&gt;</span><span style="left:459px">法定主动公开内容&gt;</span><span style="left:568px">重点领域（公共服务）</span><span style="left:690px">&gt;</span><span style="left:700px">行政执法公示&gt;</span><span style="left:784.7px">事前公示&gt;</span><span style="left:845.7px">行政执法人员</span>
</div>

<table id="info">
<colgroup><col style="width:155px"><col style="width:364px"><col style="width:156px"><col style="width:364px"></colgroup>
<tr><td class="l">索引号:</td><td><span style="letter-spacing:.58px">11371622MB28565827/2025-01934</span></td><td class="l">组配分类:</td><td>行政执法人员</td></tr>
<tr><td class="l">发布机构:</td><td>阳信县市场监督管理局</td><td class="l">公开形式:</td><td>主动公开</td></tr>
</table>

<div id="atitle">阳信县市场监督管理局行政执法人员名单</div>
<div id="meta"></div>
<div class="mt" style="left:577px">发布日期：<span style="letter-spacing:.42px">2025-07-23 08:53</span></div>
<div class="mt" style="left:828px">浏览次数： 358次</div>
<div class="mt" style="left:998px">来源：阳信县市场监督管理局</div>

<table id="dt">
<colgroup><col style="width:53px"><col style="width:64px"><col style="width:45px"><col style="width:102px"><col style="width:155px"><col style="width:151px"><col style="width:87px"><col style="width:253px"></colgroup>
<tr class="h"><td>序号</td><td>姓名</td><td>性<br>别</td><td>执法证号</td><td>职务</td><td>工作岗位</td><td>执法区域</td><td>执法领域</td></tr>
<tr><td>1</td><td>宋国恒</td><td>男</td><td class="n">15150430010</td><td>局长</td><td>主管领导</td><td>阳信县</td><td>负责全县市场监管领域的监督检查</td></tr>
<tr><td>2</td><td>王再伟</td><td>男</td><td class="n">15150430022</td><td>党组副书记、二级主办</td><td>分管领导</td><td>阳信县</td><td>负责全县市场监管领域的监督检查</td></tr>
<tr><td>3</td><td>文俊涛</td><td>男</td><td class="n">15150430020</td><td>党组成员、一级主办</td><td>分管领导</td><td>阳信县</td><td>负责全县市场监管领域的监督检查</td></tr>
<tr><td>4</td><td>韩汝明</td><td>男</td><td class="n">15150430023</td><td>党组成员、一级主办</td><td>分管领导</td><td>阳信县</td><td>负责全县市场监管领域的监督检查</td></tr>
<tr><td>5</td><td>赵美珍</td><td>男</td><td class="n">15150430030</td><td>副局长</td><td>分管领导</td><td>阳信县</td><td>负责全县市场监管领域的监督检查</td></tr>
<tr><td>6</td><td>商建鹏</td><td>男</td><td class="n">15150430048</td><td>副局长</td><td>分管领导</td><td>阳信县</td><td>负责全县市场监管领域的监督检查</td></tr>
<tr><td>7</td><td>刘学军</td><td>男</td><td class="n">15150430011</td><td>副局长</td><td>分管领导</td><td>阳信县</td><td>负责全县市场监管领域的监督检查</td></tr>
</table>
</body>
</html>
